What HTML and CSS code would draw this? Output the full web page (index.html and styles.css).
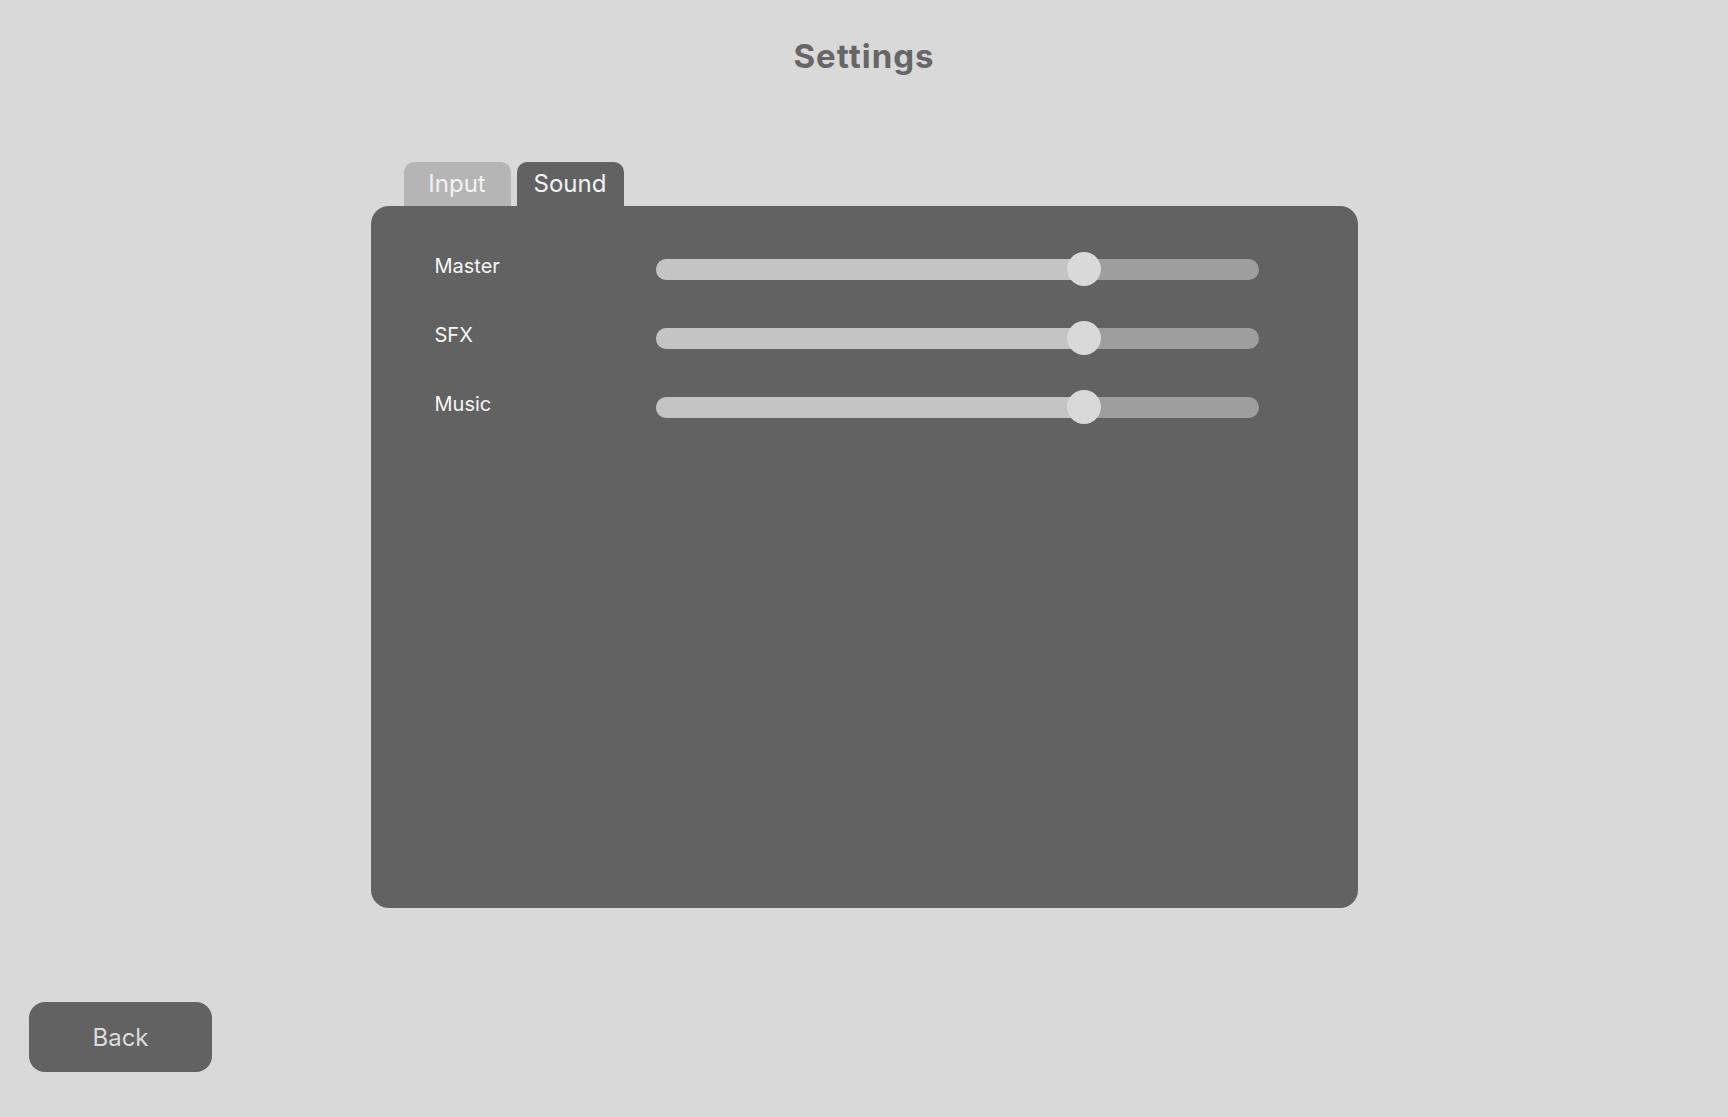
FILE: index.html
```html
<!DOCTYPE html>
<html lang="en">
<head>
  <meta charset="UTF-8" />
  <title>Settings</title>
  <link rel="stylesheet" href="styles.css">
</head>
<body>
  <header>
    <h1>Settings</h1>
  </header>

  <main>
    <div class="settings">
      <div class="tabs">
        <div class="tab">Input</div>
        <div class="tab active">Sound</div>
      </div>

      <div class="panel">
        <div class="row">
          <label>Master</label>
          <div class="slider">
            <div class="track"><div class="fill" style="width: 71%"></div></div>
            <div class="thumb" style="left: 71%"></div>
          </div>
        </div>
        <div class="row">
          <label>SFX</label>
          <div class="slider">
            <div class="track"><div class="fill" style="width: 71%"></div></div>
            <div class="thumb" style="left: 71%"></div>
          </div>
        </div>
        <div class="row">
          <label>Music</label>
          <div class="slider">
            <div class="track"><div class="fill" style="width: 71%"></div></div>
            <div class="thumb" style="left: 71%"></div>
          </div>
        </div>
      </div>
    </div>
  </main>

  <footer>
    <button class="back">Back</button>
  </footer>
</body>
</html>
```

FILE: styles.css
```css
html, body {
  margin: 0;
  height: 100vh;
}

body {
  display: flex;
  flex-direction: column;
  background: #d9d9d9;
  font-family: Inter, "Noto Sans", sans-serif;
}

header {
  text-align: center;
  padding-top: 36px;
}

h1 {
  margin: 0;
  font-size: 33px;
  line-height: 40px;
  font-weight: 700;
  letter-spacing: 1px;
  color: #666666;
}

main {
  flex: 1;
  display: flex;
  justify-content: center;
  padding-top: 86px;
}

.settings {
  width: 987px;
}

.tabs {
  display: flex;
  gap: 6px;
  padding-left: 33px;
}

.tab {
  width: 107px;
  height: 44px;
  border-radius: 10px 10px 0 0;
  background: #b5b5b5;
  color: #f2f2f2;
  font-size: 24px;
  line-height: 44px;
  text-align: center;
}

.tab.active {
  background: #626262;
}

.panel {
  height: 702px;
  box-sizing: border-box;
  background: #626262;
  border-radius: 18px;
  padding: 46px 0 0 64px;
  display: flex;
  flex-direction: column;
  gap: 35px;
}

.row {
  display: flex;
  align-items: flex-start;
  height: 34px;
}

label {
  width: 221px;
  font-size: 20px;
  line-height: 28px;
  color: #f5f5f5;
}

.slider {
  position: relative;
  width: 603px;
  height: 34px;
  display: flex;
  align-items: center;
}

.track {
  width: 100%;
  height: 21px;
  border-radius: 11px;
  background: #9e9e9e;
  overflow: hidden;
}

.fill {
  height: 100%;
  background: #c4c4c4;
}

.thumb {
  position: absolute;
  top: 0;
  width: 34px;
  height: 34px;
  margin-left: -17px;
  border-radius: 50%;
  background: #d9d9d9;
}

footer {
  padding: 0 0 45px 29px;
}

.back {
  display: block;
  width: 183px;
  height: 70px;
  border: none;
  border-radius: 16px;
  background: #626262;
  color: #dcdcdc;
  font-family: Inter, "Noto Sans", sans-serif;
  font-size: 24px;
}
```
